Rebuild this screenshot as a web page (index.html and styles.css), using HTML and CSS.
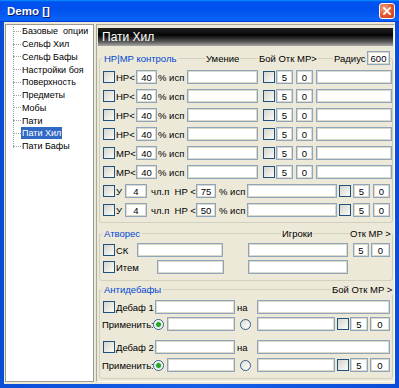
FILE: index.html
```html
<!DOCTYPE html>
<html lang="ru">
<head>
    <meta charset="UTF-8">
    <title>Demo []</title>
    <link rel="stylesheet" href="styles.css">
</head>
<body>
    <div class="window">
        <div class="titlebar">
            <span class="title">Demo []</span>
            <button class="close">
                <svg width="16" height="16" viewBox="0 0 16 16"><path d="M4.5 4.5 L11.5 11.5 M11.5 4.5 L4.5 11.5" stroke="#fff" stroke-width="2" stroke-linecap="square"/></svg>
            </button>
        </div>

        <div class="client">
            <div class="tree">
                <ul>
                    <li><span class="branch"></span><span class="node">Базовые  опции</span></li>
                    <li><span class="branch"></span><span class="node">Сельф Хил</span></li>
                    <li><span class="branch"></span><span class="node">Сельф Бафы</span></li>
                    <li><span class="branch"></span><span class="node">Настройки боя</span></li>
                    <li><span class="branch"></span><span class="node">Поверхность</span></li>
                    <li><span class="branch"></span><span class="node">Предметы</span></li>
                    <li><span class="branch"></span><span class="node">Мобы</span></li>
                    <li><span class="branch"></span><span class="node">Пати</span></li>
                    <li class="selected"><span class="branch"></span><span class="node">Пати Хил</span></li>
                    <li><span class="branch"></span><span class="node">Пати Бафы</span></li>
                </ul>
            </div>

            <div class="panel">
                <div class="panel-title">Пати Хил</div>

                <!-- HP / MP control -->
                <div class="group group-hp">
                    <div class="group-head">
                        <span class="cell cell-legend"><span class="legend">HP|MP контроль</span></span>
                        <span class="cell"><span class="head-label">Умение</span></span>
                        <span class="cell"><span class="head-label">Бой Отк MP&gt;</span></span>
                        <span class="cell"><span class="head-label">Радиус</span></span>
                        <input class="field num w-radius" value="600">
                    </div>
                    <div class="rows">
                        <div class="row">
                            <input type="checkbox" class="cb"><span class="lbl w-hp">HP&lt;</span><input class="field num w-pct" value="40"><span class="lbl w-use">% исп</span><input class="field w-skill"><input type="checkbox" class="cb ml5"><input class="field num w-n ml1" value="5"><input class="field num w-n ml3" value="0"><input class="field w-target ml3">
                        </div>
                        <div class="row">
                            <input type="checkbox" class="cb"><span class="lbl w-hp">HP&lt;</span><input class="field num w-pct" value="40"><span class="lbl w-use">% исп</span><input class="field w-skill"><input type="checkbox" class="cb ml5"><input class="field num w-n ml1" value="5"><input class="field num w-n ml3" value="0"><input class="field w-target ml3">
                        </div>
                        <div class="row">
                            <input type="checkbox" class="cb"><span class="lbl w-hp">HP&lt;</span><input class="field num w-pct" value="40"><span class="lbl w-use">% исп</span><input class="field w-skill"><input type="checkbox" class="cb ml5"><input class="field num w-n ml1" value="5"><input class="field num w-n ml3" value="0"><input class="field w-target ml3">
                        </div>
                        <div class="row">
                            <input type="checkbox" class="cb"><span class="lbl w-hp">HP&lt;</span><input class="field num w-pct" value="40"><span class="lbl w-use">% исп</span><input class="field w-skill"><input type="checkbox" class="cb ml5"><input class="field num w-n ml1" value="5"><input class="field num w-n ml3" value="0"><input class="field w-target ml3">
                        </div>
                        <div class="row">
                            <input type="checkbox" class="cb"><span class="lbl w-hp">MP&lt;</span><input class="field num w-pct" value="40"><span class="lbl w-use">% исп</span><input class="field w-skill"><input type="checkbox" class="cb ml5"><input class="field num w-n ml1" value="5"><input class="field num w-n ml3" value="0"><input class="field w-target ml3">
                        </div>
                        <div class="row">
                            <input type="checkbox" class="cb"><span class="lbl w-hp">MP&lt;</span><input class="field num w-pct" value="40"><span class="lbl w-use">% исп</span><input class="field w-skill"><input type="checkbox" class="cb ml5"><input class="field num w-n ml1" value="5"><input class="field num w-n ml3" value="0"><input class="field w-target ml3">
                        </div>
                        <div class="row">
                            <input type="checkbox" class="cb"><span class="lbl w-y">У</span><input class="field num w-cnt" value="4"><span class="lbl w-party">чл.п  HP &lt;</span><input class="field num w-pct2" value="75"><span class="lbl w-use2">% исп</span><input class="field w-skill2"><input type="checkbox" class="cb ml2"><input class="field num w-n ml2" value="5"><input class="field num w-n ml3" value="0">
                        </div>
                        <div class="row">
                            <input type="checkbox" class="cb"><span class="lbl w-y">У</span><input class="field num w-cnt" value="4"><span class="lbl w-party">чл.п  HP &lt;</span><input class="field num w-pct2" value="50"><span class="lbl w-use2">% исп</span><input class="field w-skill2"><input type="checkbox" class="cb ml2"><input class="field num w-n ml2" value="5"><input class="field num w-n ml3" value="0">
                        </div>
                    </div>
                </div>

                <!-- Atvores -->
                <div class="group group-atv">
                    <div class="group-head">
                        <span class="cell cell-legend"><span class="legend">Атворес</span></span>
                        <span class="cell"><span class="head-label">Игроки</span></span>
                        <span class="cell"><span class="head-label">Отк MP &gt;</span></span>
                    </div>
                    <div class="rows">
                        <div class="row">
                            <input type="checkbox" class="cb"><span class="lbl w-sk">СК</span><input class="field w-sk-f"><input class="field w-player ml25"><input class="field num w-n2 ml5" value="5"><input class="field num w-n3 ml2" value="0">
                        </div>
                        <div class="row">
                            <input type="checkbox" class="cb"><span class="lbl w-item">Итем</span><input class="field w-item-f"><input class="field w-player ml24">
                        </div>
                    </div>
                </div>

                <!-- Antidebuffs -->
                <div class="group group-anti">
                    <div class="group-head">
                        <span class="cell cell-legend"><span class="legend">Антидебафы</span></span>
                        <span class="cell"><span class="head-label">Бой Отк MP &gt;</span></span>
                    </div>
                    <div class="rows">
                        <div class="row">
                            <input type="checkbox" class="cb"><span class="lbl w-debuff">Дебаф 1</span><input class="field w-debuff-f"><span class="lbl w-on">на</span><input class="field w-on-f">
                        </div>
                        <div class="row">
                            <span class="lbl w-apply">Применить:</span><input type="radio" name="a1" class="radio" checked><input class="field w-apply-f ml3"><input type="radio" name="a1" class="radio ml5"><input class="field w-apply-f2 ml6"><input type="checkbox" class="cb ml2"><input class="field num w-n4 ml1" value="5"><input class="field num w-n5 ml2" value="0">
                        </div>
                        <div class="row spaced">
                            <input type="checkbox" class="cb"><span class="lbl w-debuff">Дебаф 2</span><input class="field w-debuff-f"><span class="lbl w-on">на</span><input class="field w-on-f">
                        </div>
                        <div class="row">
                            <span class="lbl w-apply">Применить:</span><input type="radio" name="a2" class="radio" checked><input class="field w-apply-f ml3"><input type="radio" name="a2" class="radio ml5"><input class="field w-apply-f2 ml6"><input type="checkbox" class="cb ml2"><input class="field num w-n4 ml1" value="5"><input class="field num w-n5 ml2" value="0">
                        </div>
                    </div>
                </div>
            </div>
        </div>
    </div>
</body>
</html>
```

FILE: styles.css
```css
* {
    box-sizing: border-box;
}
body {
    margin: 0;
    font-family: "Liberation Sans", Arial, sans-serif;
    font-size: 9.5px;
    color: #000;
}
.window {
    width: 399px;
    height: 388px;
    background: linear-gradient(to right, #0a4ed8, #1660e8 50%, #0a4ed8);
    display: flex;
    flex-direction: column;
}
.titlebar {
    height: 22px;
    flex: none;
    display: flex;
    align-items: center;
    justify-content: space-between;
    padding: 0 4px 0 7px;
    background: linear-gradient(180deg, #0997ff, #0053ee 8%, #0050ee 40%, #0a62f5 88%, #0a62f5 93%, #005bff 95%, #003dd7 96%, #003dd7);
}
.title {
    color: #fff;
    font-weight: bold;
    font-size: 11.5px;
    text-shadow: 1px 1px #0a1a6a;
}
.close {
    width: 16px;
    height: 16px;
    padding: 0;
    border: 1px solid #fff;
    border-radius: 3px;
    background: radial-gradient(circle at 30% 30%, #f4a17e, #e2542c 55%, #c93c1c);
    display: flex;
    align-items: center;
    justify-content: center;
}
.close svg {
    display: block;
    width: 14px;
    height: 14px;
}
.client {
    flex: 1;
    min-height: 0;
    margin: 0 4px 4px;
    background-color: #ece9d8;
    display: flex;
    gap: 2px;
    padding: 2px 0 2px 1px;
}

/* tree */
.tree {
    width: 89px;
    flex: none;
    background-color: #fff;
    border: 1px solid #9c9a8e;
    font-size: 9px;
    overflow: hidden;
}
.tree ul {
    list-style: none;
    margin: 0 0 0 7px;
    padding: 0;
    background-image: repeating-linear-gradient(to bottom, #a0a0a0 0 1px, transparent 1px 2px);
    background-size: 1px calc(100% - 6px);
    background-repeat: no-repeat;
    background-position: 0 2px;
}
.tree li {
    display: flex;
    align-items: center;
    height: 12.75px;
    white-space: pre;
}
.branch {
    width: 8px;
    border-top: 1px dotted #a0a0a0;
}
.node {
    padding: 0 1px;
    line-height: 12px;
}
.tree li.selected .node {
    background-color: #316ac5;
    color: #fff;
}

/* right panel */
.panel {
    flex: 1;
    min-width: 0;
    border: 1px solid;
    border-color: #aca899 #fff #fff #aca899;
    padding: 3px 1px 0;
}
.panel-title {
    height: 18px;
    line-height: 18px;
    padding-left: 4px;
    color: #fff;
    font-size: 12px;
    background: linear-gradient(to bottom, #222 0%, #050505 40%, #555 75%, #a9a9a9 100%);
}
.group {
    margin: 12px 0 0 1px;
    border: 1px solid #d0d0bf;
    border-radius: 3px;
    padding: 0 0 5px 3px;
}
.group-atv {
    margin-top: 10px;
    padding-bottom: 6px;
}
.group-anti {
    margin-top: 8px;
    padding-bottom: 6px;
}
.group-head {
    display: grid;
    align-items: center;
    justify-items: start;
    height: 14px;
    margin: -8px 0 0 -3px;
}
.group-hp .group-head {
    grid-template-columns: 105px 53px 75px 34px 23px;
}
.group-atv .group-head {
    grid-template-columns: 181px 68px 1fr;
}
.group-anti .group-head {
    grid-template-columns: 231px 1fr;
}
.cell-legend {
    padding-left: 2px;
}
.legend {
    color: #0046d5;
    background-color: #ece9d8;
    padding: 0 2px;
    white-space: pre;
}
.head-label {
    background-color: #ece9d8;
    padding: 0 1px;
    white-space: pre;
}
.rows {
    display: flex;
    flex-direction: column;
    gap: 5px;
    margin-top: 5px;
}
.group-atv .rows {
    gap: 3px;
    margin-top: 3px;
}
.group-anti .rows {
    gap: 3px;
    margin-top: 4px;
}
.group-anti .row.spaced {
    margin-top: 6px;
}
.group-anti .row.spaced + .row {
    margin-top: 1px;
}
.row {
    display: flex;
    align-items: center;
    height: 14px;
}

/* controls */
.field {
    height: 14px;
    margin: 0;
    padding: 0 3px;
    border: 1px solid #8ea5bc;
    box-shadow: inset 0 0 0 1px #dcd9cc;
    background-color: #fff;
    font: inherit;
    color: #000;
    outline: none;
    flex: none;
}
.field.num {
    text-align: center;
    padding: 0;
}
.cb {
    appearance: none;
    width: 12px;
    height: 12px;
    margin: 0;
    flex: none;
    border: 1px solid #1c5180;
    background: linear-gradient(135deg, #d6d5cc, #fbfbf8);
}
.radio {
    appearance: none;
    width: 11px;
    height: 11px;
    margin: 0;
    flex: none;
    border: 1px solid #2f5d8a;
    border-radius: 50%;
    background: linear-gradient(135deg, #e0dfd6, #fff);
}
.radio:checked {
    background: radial-gradient(circle, #2aa52a 0 2px, #8ad18a 2.5px, #fff 3.5px);
}
.lbl {
    flex: none;
    padding-left: 1px;
    white-space: pre;
    overflow: hidden;
}

/* column widths */
.w-radius { width: 23px; }
.w-hp { width: 21px; }
.w-pct { width: 21px; }
.w-use { width: 30px; }
.w-skill { width: 71px; }
.w-n { width: 17px; }
.w-target { width: 76px; }
.w-y { width: 10px; }
.w-cnt { width: 22px; }
.w-party { width: 49px; padding-left: 4px; }
.w-pct2 { width: 20px; }
.w-use2 { width: 31px; padding-left: 3px; }
.w-skill2 { width: 90px; }
.w-sk { width: 22px; }
.w-sk-f { width: 86px; }
.w-item { width: 42px; }
.w-item-f { width: 67px; }
.w-player { width: 100px; }
.w-n2 { width: 16px; }
.w-n3 { width: 19px; }
.w-debuff { width: 40px; }
.w-debuff-f { width: 80px; }
.w-on { width: 22px; padding-left: 2px; }
.w-on-f { width: 133px; }
.w-apply { width: 51px; margin-left: -1px; padding-left: 0; }
.w-apply-f { width: 68px; }
.w-apply-f2 { width: 78px; }
.w-n4 { width: 18px; }
.w-n5 { width: 20px; }

.ml1 { margin-left: 1px; }
.ml2 { margin-left: 2px; }
.ml3 { margin-left: 3px; }
.ml5 { margin-left: 5px; }
.ml6 { margin-left: 6px; }
.ml24 { margin-left: 24px; }
.ml25 { margin-left: 25px; }
```
